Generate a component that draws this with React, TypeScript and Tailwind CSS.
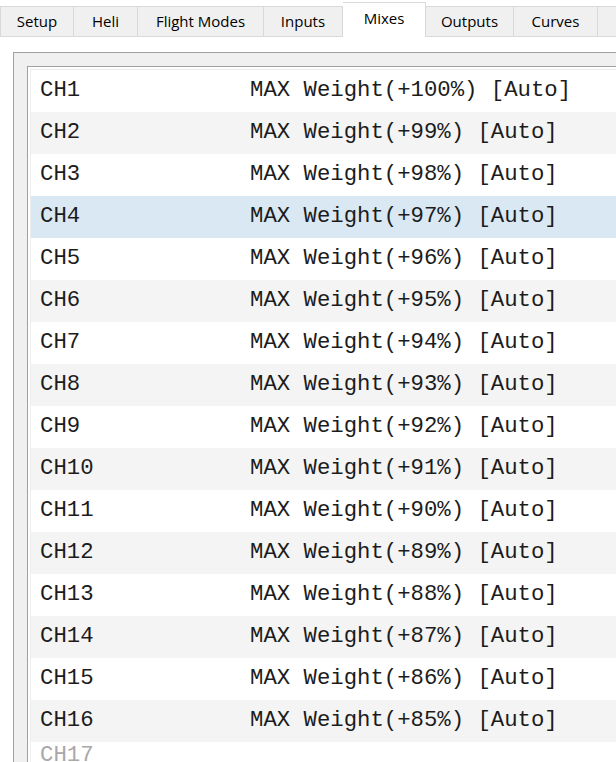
import React from "react";

const tabs = [
  { label: "Setup", w: "w-[74px]" },
  { label: "Heli", w: "w-[64px]" },
  { label: "Flight Modes", w: "w-[126px]" },
  { label: "Inputs", w: "w-[79px]" },
  { label: "Mixes", w: "w-[83px]", active: true },
  { label: "Outputs", w: "w-[88px]" },
  { label: "Curves", w: "w-[84px]" },
  { label: "", w: "w-[60px]" },
];

export default function App() {
  const rows = Array.from({ length: 16 }, (_, i) => ({
    ch: `CH${i + 1}`,
    weight: 100 - i,
  }));
  return (
    <div className="w-[616px] h-[762px] overflow-hidden bg-white" style={{ fontFamily: "'Open Sans', 'Noto Sans', sans-serif" }}>
      <div className="flex h-[37px] items-end whitespace-nowrap">
        {tabs.map((t, i) =>
          t.active ? (
            <div
              key={i}
              className={`${t.w} shrink-0 h-[35px] bg-white border-t border-r border-[#d9d9d9] flex items-center justify-center text-[15px] text-black pb-[3px]`}
            >
              {t.label}
            </div>
          ) : (
            <div
              key={i}
              className={`${t.w} shrink-0 h-[31px] bg-[#f0f0f0] border-t border-r border-b border-[#d9d9d9] ${i === 0 ? "border-l" : ""} flex items-center justify-center text-[15px] text-black`}
            >
              {t.label}
            </div>
          )
        )}
      </div>
      <div className="pl-[13px] pt-[15px]">
        <div className="w-[700px] h-[800px] border border-[#a0a0a0] bg-[#f0f0f0] pl-[13px] pt-[13px]">
          <div className="h-[800px] border border-[#a0a0a0] bg-white p-[2px]">
            <div className="h-full border-l border-t border-[#ececec]" style={{ fontFamily: "'Liberation Mono', 'Courier New', monospace" }}>
              {rows.map((r, i) => {
                const bg = i === 3 ? "bg-[#dae8f4]" : i % 2 === 1 ? "bg-[#f4f4f4]" : "bg-white";
                return (
                  <div key={r.ch} className={`flex items-center h-[42px] text-[22.3px] text-[#1c1c1c] whitespace-pre ${bg}`}>
                    <span className="pl-[9px] w-[219px] shrink-0">{r.ch}</span>
                    <span>{`MAX Weight(+${r.weight}%) [Auto]`}</span>
                  </div>
                );
              })}
              <div className="flex items-center h-[26px] text-[22.3px] leading-[26px] text-[#a8a8a8] whitespace-pre bg-white">
                <span className="pl-[9px] w-[219px] shrink-0">CH17</span>
              </div>
            </div>
          </div>
        </div>
      </div>
    </div>
  );
}
